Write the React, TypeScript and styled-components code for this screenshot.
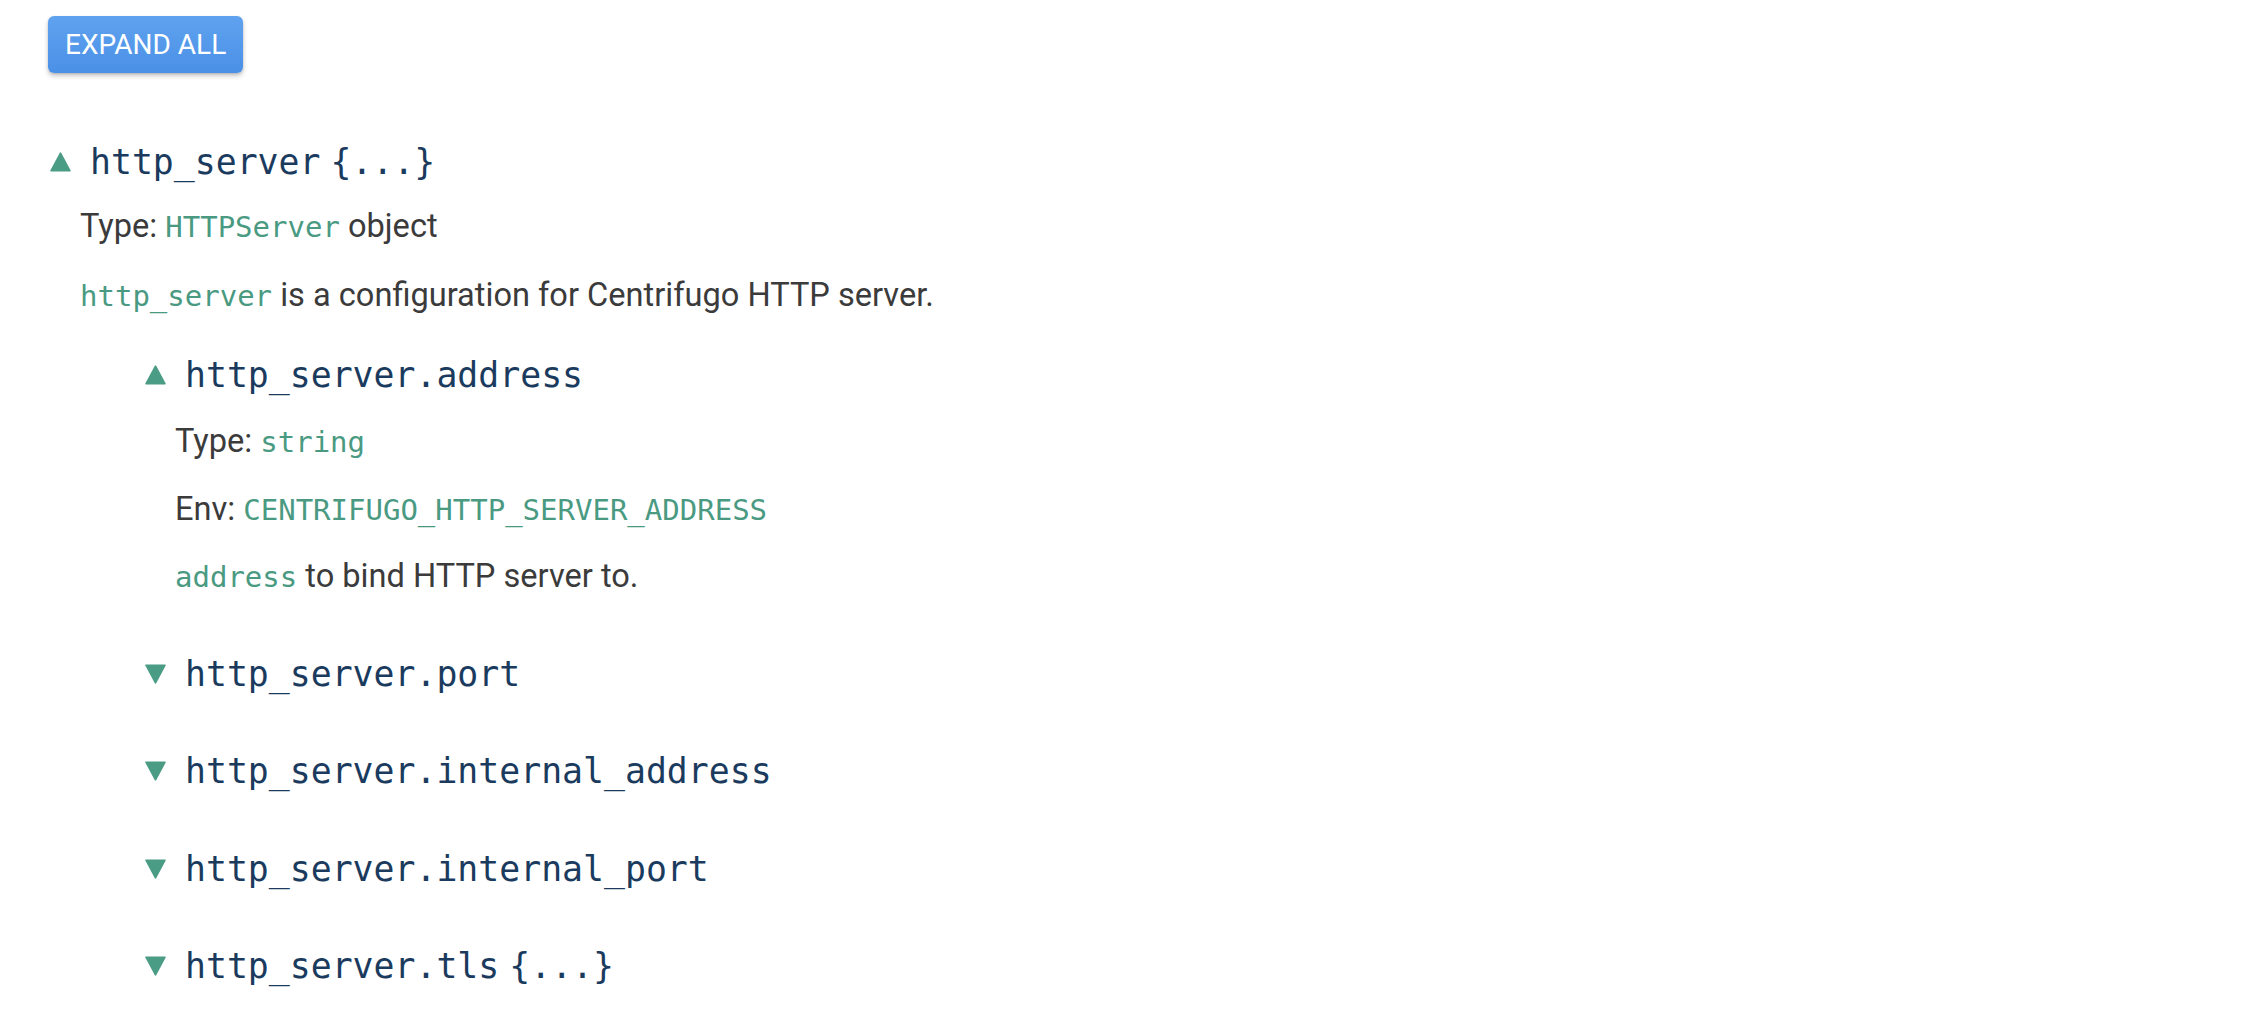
import React from "react";
import styled, { createGlobalStyle } from "styled-components";

const GlobalStyle = createGlobalStyle`
  html, body {
    margin: 0;
    padding: 0;
    background: #ffffff;
  }
  body {
    font-family: Roboto, "Liberation Sans", sans-serif;
    color: #3b3b3b;
    -webkit-font-smoothing: antialiased;
  }
`;

const Page = styled.div`
  display: flex;
  flex-direction: column;
  align-items: flex-start;
  padding: 16px 0 0 48px;
`;

const ExpandButton = styled.button`
  display: inline-flex;
  align-items: center;
  justify-content: center;
  height: 57px;
  padding: 0 17px;
  border: none;
  border-radius: 6px;
  background: linear-gradient(180deg, #5fa2ef 0%, #4a90e6 100%);
  color: #ffffff;
  font-family: Roboto, "Liberation Sans", sans-serif;
  font-size: 28px;
  font-weight: 400;
  letter-spacing: 0;
  box-shadow: 0 3px 5px rgba(0, 0, 0, 0.22), 0 1px 2px rgba(0, 0, 0, 0.12);
  cursor: pointer;
`;

const Tree = styled.div`
  display: flex;
  flex-direction: column;
  margin: 64px 0 0 2px;
`;

const PropList = styled.div`
  display: flex;
  flex-direction: column;
  gap: 47.5px;
  margin: 7px 0 0 65px;
`;

const Prop = styled.div`
  display: flex;
  flex-direction: column;
`;

const PropHeader = styled.div`
  display: flex;
  align-items: center;
  height: 50px;
  gap: 19px;
  cursor: pointer;
`;

const PropName = styled.span`
  font-family: "DejaVu Sans Mono", "Liberation Mono", monospace;
  font-size: 34.8px;
  color: #1b3b5e;
  white-space: nowrap;
`;

const Braces = styled.span`
  margin-left: 10px;
`;

const Details = styled.div<{ $top: number; $gap: number; $bottom: number }>`
  display: flex;
  flex-direction: column;
  gap: ${(p) => p.$gap}px;
  padding: ${(p) => p.$top}px 0 ${(p) => p.$bottom}px 30px;
`;

const Line = styled.div`
  font-size: 32.6px;
  line-height: 42px;
  color: #3b3b3b;
  white-space: nowrap;
`;

const Code = styled.code`
  font-family: "DejaVu Sans Mono", "Liberation Mono", monospace;
  font-size: 29px;
  color: #4a9a82;
`;

const ToggleIcon = styled.svg`
  width: 21px;
  height: 20px;
  flex: 0 0 auto;
`;

const Toggle: React.FC<{ open: boolean }> = ({ open }) => (
  <ToggleIcon viewBox="0 0 21 20">
    {open ? (
      <path
        d="M10.5 1.2 L20 18.8 L1 18.8 Z"
        fill="#4b9c85"
        stroke="#4b9c85"
        strokeWidth="1.6"
        strokeLinejoin="round"
      />
    ) : (
      <path
        d="M1 1.2 L20 1.2 L10.5 18.8 Z"
        fill="#4b9c85"
        stroke="#4b9c85"
        strokeWidth="1.6"
        strokeLinejoin="round"
      />
    )}
  </ToggleIcon>
);

const Header: React.FC<{ open: boolean; name: string; object?: boolean }> = ({
  open,
  name,
  object,
}) => (
  <PropHeader>
    <Toggle open={open} />
    <PropName>
      {name}
      {object && <Braces>{"{...}"}</Braces>}
    </PropName>
  </PropHeader>
);

const collapsed = [
  { name: "http_server.port" },
  { name: "http_server.internal_address" },
  { name: "http_server.internal_port" },
  { name: "http_server.tls", object: true },
];

export default function App() {
  return (
    <>
      <GlobalStyle />
      <Page>
        <ExpandButton>EXPAND ALL</ExpandButton>
        <Tree>
          <Prop>
            <Header open name="http_server" object />
            <Details $top={18} $gap={26} $bottom={0}>
              <Line>
                Type: <Code>HTTPServer</Code> object
              </Line>
              <Line>
                <Code>http_server</Code> is a configuration for Centrifugo HTTP server.
              </Line>
              <PropList>
                <Prop>
                  <Header open name="http_server.address" />
                  <Details $top={20} $gap={24.5} $bottom={3}>
                    <Line>
                      Type: <Code>string</Code>
                    </Line>
                    <Line>
                      Env: <Code>CENTRIFUGO_HTTP_SERVER_ADDRESS</Code>
                    </Line>
                    <Line>
                      <Code>address</Code> to bind HTTP server to.
                    </Line>
                  </Details>
                </Prop>
                {collapsed.map((c) => (
                  <Prop key={c.name}>
                    <Header open={false} name={c.name} object={c.object} />
                  </Prop>
                ))}
              </PropList>
            </Details>
          </Prop>
        </Tree>
      </Page>
    </>
  );
}
